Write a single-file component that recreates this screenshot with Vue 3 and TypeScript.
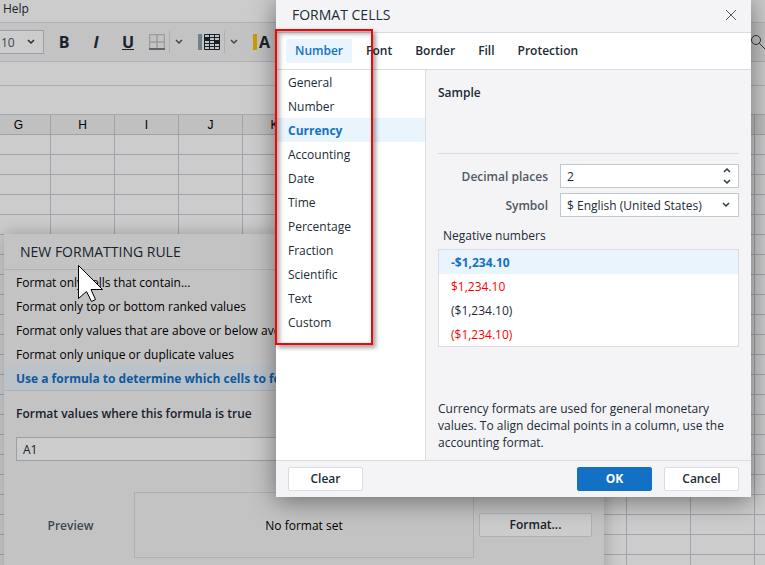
<script setup lang="ts">
import { ref } from 'vue'

const columns = ['G', 'H', 'I', 'J', 'K', '', '', '', '', '', '', '', '']
const rowCount = 22

const rules = [
  'Format only cells that contain...',
  'Format only top or bottom ranked values',
  'Format only values that are above or below average',
  'Format only unique or duplicate values',
  'Use a formula to determine which cells to format',
]
const activeRule = ref(4)
const formula = ref('A1')

const tabs = ['Number', 'Font', 'Border', 'Fill', 'Protection']
const activeTab = ref('Number')

const categories = [
  'General', 'Number', 'Currency', 'Accounting', 'Date', 'Time',
  'Percentage', 'Fraction', 'Scientific', 'Text', 'Custom',
]
const activeCategory = ref('Currency')

const decimals = ref('2')
const negatives = [
  { text: '-$1,234.10', red: false },
  { text: '$1,234.10', red: true },
  { text: '($1,234.10)', red: false },
  { text: '($1,234.10)', red: true },
]
const activeNegative = ref(0)

function step(by: number): void {
  decimals.value = String(Math.max(0, Number(decimals.value) + by))
}
</script>

<template>
  <div class="app">
    <nav class="menubar"><a href="#">Help</a></nav>

    <div class="toolbar">
      <div class="size-box">
        <select aria-label="Font size"><option>10</option></select>
        <svg class="chev" viewBox="0 0 8 6"><path d="M1 1l3 3 3-3" /></svg>
      </div>
      <button class="tool bold" type="button">B</button>
      <button class="tool italic" type="button">I</button>
      <button class="tool underline" type="button">U</button>
      <div class="split first">
        <button type="button" aria-label="Borders">
          <svg width="16" height="16" viewBox="0 0 16 16">
            <path d="M.5 14V1.500a1 1 0 0 1 1-1h13a1 1 0 0 1 1 1V14M8 1v13M1 8h14" fill="none" stroke="#c4c4c8" stroke-width="1.500" />
            <path d="M0 15h16" stroke="#7a7f86" stroke-width="2" />
          </svg>
        </button>
        <button class="drop" type="button" aria-label="Border options">
          <svg class="chev" viewBox="0 0 8 6"><path d="M1 1l3 3 3-3" /></svg>
        </button>
      </div>
      <div class="split">
        <button type="button" aria-label="Conditional formatting">
          <svg width="22" height="16" viewBox="0 0 22 16">
            <path d="M0 0h4v16H0z" fill="#8ba3a9" />
            <rect x="6" y="0" width="16" height="16" rx="1" fill="#1c2733" />
            <path d="M7 1h4v2H7zM12 1h4v2h-4zM17 1h4v2h-4zM12 4h4v2h-4zM17 4h4v2h-4zM7 7h4v2H7zM12 7h4v2h-4zM7 10h4v2H7zM12 10h4v2h-4zM17 10h4v2h-4zM7 13h4v2H7zM12 13h4v2h-4zM17 13h4v2h-4z" fill="#f4f4f6" />
          </svg>
        </button>
        <button class="drop" type="button" aria-label="Conditional formatting options">
          <svg class="chev" viewBox="0 0 8 6"><path d="M1 1l3 3 3-3" /></svg>
        </button>
      </div>
      <button class="tool color" type="button"><span class="swatch"></span>A</button>
      <button class="search" type="button" aria-label="Search">
        <svg width="16" height="16" viewBox="0 0 16 16"><circle cx="7" cy="6" r="4.500" /><path d="M10.300 9.300l6 6" /></svg>
      </button>
    </div>
    <div class="formula-bar"></div>
    <div class="name-bar"></div>

    <div class="sheet">
      <table>
        <thead><tr><th v-for="(c, i) in columns" :key="i">{{ c }}</th></tr></thead>
        <tbody>
          <tr v-for="r in rowCount" :key="r"><td v-for="(c, i) in columns" :key="i"></td></tr>
        </tbody>
      </table>
    </div>

    <section class="rule-dialog" aria-label="New formatting rule">
      <h2>NEW FORMATTING RULE</h2>
      <ul class="list">
        <li v-for="(r, i) in rules" :key="r">
          <button type="button" :class="{ active: i === activeRule }" @click="activeRule = i">{{ r }}</button>
        </li>
      </ul>
      <div class="rule-body">
        <label for="formula">Format values where this formula is true</label>
        <input id="formula" v-model="formula" type="text" />
        <div class="preview-row">
          <span class="preview-label">Preview</span>
          <div class="preview">No format set</div>
          <button class="btn wide" type="button">Format...</button>
        </div>
      </div>
    </section>

    <div class="overlay"></div>

    <section class="format-dialog" aria-label="Format cells">
      <header>
        <h2>FORMAT CELLS</h2>
        <button class="close" type="button" aria-label="Close">
          <svg width="12" height="12" viewBox="0 0 12 12"><path d="M1 1l10 10M11 1L1 11" /></svg>
        </button>
      </header>
      <nav class="tabs">
        <button v-for="t in tabs" :key="t" type="button" :class="{ active: t === activeTab }" @click="activeTab = t">{{ t }}</button>
      </nav>
      <div class="content">
        <ul class="list categories">
          <li v-for="c in categories" :key="c">
            <button type="button" :class="{ active: c === activeCategory }" @click="activeCategory = c">{{ c }}</button>
          </li>
        </ul>
        <div class="pane">
          <div class="sample">Sample</div>
          <div class="fields">
            <label for="decimals">Decimal places</label>
            <div class="field">
              <input id="decimals" v-model="decimals" type="text" />
              <div class="spinner">
                <button type="button" aria-label="Increase" @click="step(1)">
                  <svg class="chev" viewBox="0 0 8 6"><path d="M1 5l3-3 3 3" /></svg>
                </button>
                <button type="button" aria-label="Decrease" @click="step(-1)">
                  <svg class="chev" viewBox="0 0 8 6"><path d="M1 1l3 3 3-3" /></svg>
                </button>
              </div>
            </div>
            <label for="symbol">Symbol</label>
            <div class="field">
              <select id="symbol"><option>$ English (United States)</option></select>
              <svg class="chev" viewBox="0 0 8 6"><path d="M1 1l3 3 3-3" /></svg>
            </div>
          </div>
          <div class="neg-title">Negative numbers</div>
          <ul class="list negatives">
            <li v-for="(n, i) in negatives" :key="i">
              <button type="button" :class="{ red: n.red, active: i === activeNegative }" @click="activeNegative = i">{{ n.text }}</button>
            </li>
          </ul>
          <p class="description">Currency formats are used for general monetary values. To align decimal points in a column, use the accounting format.</p>
        </div>
      </div>
      <footer>
        <button class="btn" type="button">Clear</button>
        <button class="btn primary" type="button">OK</button>
        <button class="btn" type="button">Cancel</button>
      </footer>
    </section>

    <div class="highlight"></div>
    <svg class="cursor" width="27" height="40" viewBox="0 0 27 40">
      <path d="M.5 1.500V34.500L8.500 27.500L13.500 37.500L17.500 35.500L13 25.500H24.500Z" />
    </svg>
  </div>
</template>

<style>
body { overflow: hidden; }
</style>

<style scoped>
.app {
  position: relative;
  height: 100vh;
  overflow: hidden;
  display: flex;
  flex-direction: column;
  background: #fff;
  color: #212b36;
  font: 12px/17px "Open Sans", "Noto Sans", sans-serif;
}
*, *::before { box-sizing: border-box; }
button, input, select {
  margin: 0;
  padding: 0;
  border: 0;
  background: none;
  font: inherit;
  color: inherit;
  appearance: none;
  outline: none;
}
h2, ul, p { margin: 0; padding: 0; }
h2 { font-size: 14px; line-height: 20px; font-weight: 400; }
ul { list-style: none; }
svg { display: block; }
.chev { width: 8px; height: 6px; fill: none; stroke: #2d3742; stroke-width: 1.5; }

.menubar { flex: none; height: 23px; border-bottom: 1px solid #d9dce5; padding-left: 3px; }
.menubar a { color: inherit; text-decoration: none; }
.toolbar { flex: none; display: flex; align-items: center; height: 39px; background: #f4f4f6; border-bottom: 1px solid #d9dce5; }
.size-box { position: relative; width: 44px; height: 24px; margin-right: 4px; background: #fff; border: 1px solid #c0c8d2; border-left: 0; display: flex; align-items: center; }
.size-box select { width: 100%; height: 100%; padding-left: 1px; color: #4f5964; }
.size-box .chev { position: absolute; right: 8px; pointer-events: none; }
.tool { width: 32px; text-align: center; font-size: 16px; line-height: 24px; font-weight: 700; }
.italic { font-style: italic; }
.underline { text-decoration: underline; }
.split { display: flex; align-items: center; margin-right: 15px; }
.split.first { margin-left: 5px; }
.drop { height: 22px; margin-left: 4px; padding-left: 5px; border-left: 1px solid #d9dce5; }
.drop .chev { stroke: #4f5964; }
.color { display: flex; align-items: center; gap: 2px; width: auto; }
.swatch { width: 4px; height: 16px; background: #ffc400; }
.search { margin-left: auto; }
.search svg { fill: none; stroke: #3a444e; stroke-width: 1; }
.formula-bar { flex: none; height: 24px; border-bottom: 1px solid #d9dce5; }
.name-bar { flex: none; height: 29px; border-bottom: 1px solid #d0d3dc; }

.sheet { flex: 1; min-height: 0; overflow: hidden; }
table { width: 832px; margin-left: -13px; table-layout: fixed; border-collapse: separate; border-spacing: 0; }
th, td { height: 20px; padding: 0; border-right: 1px solid #c8cddb; border-bottom: 1px solid #c8cddb; }
th { background: #f0f0f0; border-color: #c9ccd0; color: #000; font: 12px/18px "Liberation Sans", Arial, sans-serif; }

.list button { display: block; width: 100%; height: 24px; padding: 0 12px; text-align: left; white-space: nowrap; overflow: hidden; }
.list .active { background: #eaf4fd; color: #1271c4; font-weight: 700; }
.categories button, .rule-dialog .list button { padding-top: 1px; }
.btn { height: 24px; width: 75px; padding-bottom: 1px; background: #fff; border: 1px solid #d9dce5; border-radius: 2px; font-weight: 600; }
.btn.primary { background: #1271c4; border-color: #1271c4; color: #fff; font-weight: 700; margin-left: auto; }
.btn.wide { width: 113px; }

.rule-dialog { position: absolute; left: 4px; top: 234px; bottom: -20px; width: 600px; background: #f4f4f6; box-shadow: 0 0 16px rgba(0, 0, 0, .25); color: #000; }
.rule-dialog h2 { height: 36px; padding: 8px 16px; border-bottom: 1px solid #d9dce5; color: #212b36; }
.rule-dialog .list { border-bottom: 1px solid #d9dce5; }
.rule-body { padding: 14px 12px 0; color: #212b36; font-weight: 600; }
.rule-body label { display: block; }
.rule-body input { width: 100%; height: 24px; margin-top: 15px; padding: 0 6px; background: #fff; border: 1px solid #c0c8d2; font-weight: 400; }
.preview-row { display: flex; align-items: center; margin-top: 31px; gap: 5px; }
.preview-label { width: 113px; padding-right: 4px; text-align: center; color: #4f5964; }
.preview { flex: 1; height: 66px; display: grid; place-items: center; border: 1px solid #d9dce5; color: #000; font-weight: 400; }

.overlay { position: absolute; inset: 0; background: rgba(0, 0, 0, .2); }

.format-dialog { position: absolute; left: 276px; right: 14px; top: -3px; display: flex; flex-direction: column; background: #f4f4f6; box-shadow: 0 4px 24px rgba(0, 0, 0, .45); }
.format-dialog header { display: flex; align-items: center; justify-content: space-between; height: 36px; padding: 0 14px 0 16px; border-bottom: 1px solid #d9dce5; }
.close svg { fill: none; stroke: #4f5964; stroke-width: 1; }
.tabs { display: flex; align-items: center; gap: 5px; height: 37px; padding: 0 10px; background: #fff; border-bottom: 1px solid #d9dce5; }
.tabs button { height: 24px; padding: 0 9px 1px; border-radius: 2px; font-weight: 600; }
.tabs .active { background: #eaf4fd; color: #1271c4; }
.content { display: flex; height: 390px; }
.categories { flex: none; width: 150px; background: #fff; border-right: 1px solid #d9dce5; }
.pane { flex: 1; min-width: 0; display: flex; flex-direction: column; padding: 14px 12px 9px; }
.sample { height: 70px; border-bottom: 1px solid #d9dce5; font-weight: 600; }
.fields { display: grid; grid-template-columns: 110px 1fr; gap: 5px 12px; align-items: center; margin-top: 10px; }
.fields label { text-align: right; color: #4f5964; font-weight: 600; }
.field { position: relative; display: flex; align-items: center; height: 24px; background: #fff; border: 1px solid #c0c8d2; }
.field input, .field select { width: 100%; height: 100%; padding-left: 6px; }
.field > .chev { position: absolute; right: 8px; pointer-events: none; }
.spinner { display: flex; flex-direction: column; gap: 6px; padding-right: 7px; }
.neg-title { margin: 10px 5px 5px; }
.negatives { background: #fff; border: 1px solid #d9dce5; }
.list .red { color: #f00; }
.description { margin-top: auto; }
footer { display: flex; gap: 12px; height: 37px; padding: 6px 12px; border-top: 1px solid #d9dce5; }

.highlight { position: absolute; left: 275px; top: 29px; width: 98px; height: 316px; border: 2px solid #f00; box-shadow: 3px 3px 4px rgba(0, 0, 0, .35), inset 3px 3px 4px rgba(0, 0, 0, .3); pointer-events: none; }
.cursor { position: absolute; left: 78px; top: 264px; fill: #fff; stroke: #000; }
</style>
